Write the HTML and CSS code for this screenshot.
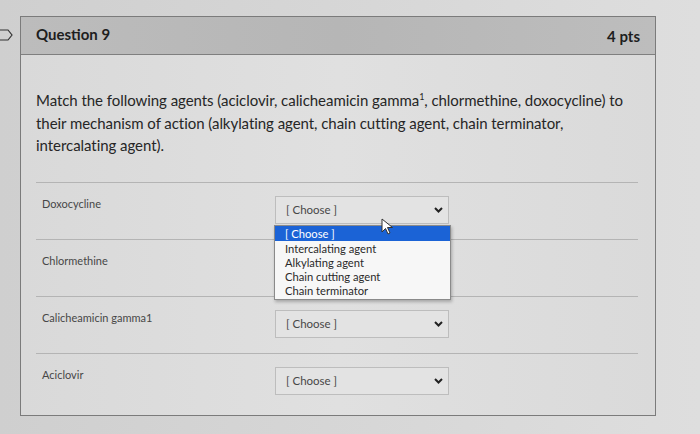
FILE: index.html
```html
<!DOCTYPE html>
<html>
<head>
  <link rel="stylesheet" href="styles.css">
</head>
<body>
  <div class="page">
    <div class="flag">
      <svg width="14" height="14" viewBox="0 0 14 14"><path d="M-2 2 H8 L12 7 L8 12 H-2" fill="none" stroke="#333" stroke-width="1.2"/></svg>
    </div>
    <div class="question">
      <div class="header">
        <div class="q-title">Question 9</div>
        <div class="q-pts">4 pts</div>
      </div>
      <div class="content">
        <p class="q-text">Match the following agents (aciclovir, calicheamicin gamma<sup>1</sup>, chlormethine, doxocycline) to their mechanism of action (alkylating agent, chain cutting agent, chain terminator, intercalating agent).</p>
        <div class="answers">
          <div class="row">
            <div class="label">Doxocycline</div>
            <div class="select-wrap">
              <div class="select">
                <span>[ Choose ]</span>
                <svg class="chev" width="9" height="6" viewBox="0 0 9 6"><path d="M1 1 L4.5 4.5 L8 1" fill="none" stroke="#222" stroke-width="2"/></svg>
              </div>
              <ul class="options">
                <li class="active">[ Choose ]</li>
                <li>Intercalating agent</li>
                <li>Alkylating agent</li>
                <li>Chain cutting agent</li>
                <li>Chain terminator</li>
              </ul>
              <svg class="cursor" width="14" height="18" viewBox="0 0 14 18"><path d="M1 1 L1 14 L4.5 10.5 L7 16 L9 15 L6.5 9.5 L11.5 9.5 Z" fill="#fff" stroke="#333" stroke-width="1"/></svg>
            </div>
          </div>
          <div class="row">
            <div class="label">Chlormethine</div>
            <div class="select-wrap">
              <div class="select">
                <span>[ Choose ]</span>
                <svg class="chev" width="9" height="6" viewBox="0 0 9 6"><path d="M1 1 L4.5 4.5 L8 1" fill="none" stroke="#222" stroke-width="2"/></svg>
              </div>
            </div>
          </div>
          <div class="row">
            <div class="label">Calicheamicin gamma1</div>
            <div class="select-wrap">
              <div class="select">
                <span>[ Choose ]</span>
                <svg class="chev" width="9" height="6" viewBox="0 0 9 6"><path d="M1 1 L4.5 4.5 L8 1" fill="none" stroke="#222" stroke-width="2"/></svg>
              </div>
            </div>
          </div>
          <div class="row">
            <div class="label">Aciclovir</div>
            <div class="select-wrap">
              <div class="select">
                <span>[ Choose ]</span>
                <svg class="chev" width="9" height="6" viewBox="0 0 9 6"><path d="M1 1 L4.5 4.5 L8 1" fill="none" stroke="#222" stroke-width="2"/></svg>
              </div>
            </div>
          </div>
        </div>
      </div>
    </div>
  </div>
</body>
</html>
```

FILE: styles.css
```css
body {
  margin: 0;
  background: linear-gradient(90deg, #cfcfcf 0%, #d8d8d8 60%, #dedede 100%);
  font-family: Lato, "Open Sans", sans-serif;
  color: #2d2d2d;
}

.page {
  position: relative;
  height: 434px;
  padding-top: 16px;
  box-sizing: border-box;
}

.flag {
  position: absolute;
  left: 0;
  top: 26px;
}

.question {
  margin-left: 20px;
  width: 636px;
  height: 400px;
  border: 1px solid #7b7b7b;
  background: linear-gradient(90deg, #d9d9d9 0%, #e0e0e0 50%, #dadada 100%);
  box-sizing: border-box;
}

.header {
  display: flex;
  justify-content: space-between;
  align-items: center;
  height: 37px;
  padding: 0 15px 0 15px;
  background: linear-gradient(90deg, #bcbcbc 0%, #b6b6b6 50%, #bdbdbd 100%);
  border-bottom: 1px solid #7f7f7f;
  font-weight: bold;
  font-size: 15px;
  color: #1e1e1e;
}

.header .q-title {
  margin-top: -3px;
}

.content {
  padding: 0 15px;
}

.q-text {
  margin: 0;
  max-width: 600px;
  padding-top: 34px;
  font-size: 15px;
  letter-spacing: -0.05px;
  line-height: 22.5px;
  color: #262626;
}

.q-text sup {
  font-size: 9px;
  line-height: 0;
}

.answers {
  margin-top: 25px;
}

.row {
  display: flex;
  height: 57px;
  border-top: 1px solid #b4b4b4;
  box-sizing: border-box;
  margin-right: 2px;
}

.label {
  width: 239px;
  padding: 14px 0 0 6px;
  box-sizing: border-box;
  font-size: 11px;
  color: #474747;
}

.select-wrap {
  position: relative;
  padding-top: 13px;
}

.select {
  display: flex;
  justify-content: space-between;
  align-items: center;
  width: 174px;
  height: 28px;
  padding: 0 5px 0 10px;
  box-sizing: border-box;
  border: 1px solid #bdbdbd;
  background: #e3e3e3;
  font-size: 11.5px;
  color: #474747;
}

.chev {
  margin-top: 1px;
}

.options {
  position: absolute;
  z-index: 5;
  left: -1px;
  top: 42px;
  width: 175px;
  margin: 0;
  padding: 0;
  list-style: none;
  background: #f7f7f7;
  border: 1px solid #8a8a8a;
  box-shadow: 1px 2px 3px rgba(0, 0, 0, 0.25);
  font-size: 11.2px;
  line-height: 14.3px;
  color: #2a2a2a;
}

.options li {
  padding-left: 10px;
}

.options li.active {
  background: #1b63d6;
  color: #ffffff;
  height: 15px;
  line-height: 15px;
  margin-bottom: 1px;
}

.cursor {
  position: absolute;
  z-index: 6;
  left: 106px;
  top: 35px;
}
```
